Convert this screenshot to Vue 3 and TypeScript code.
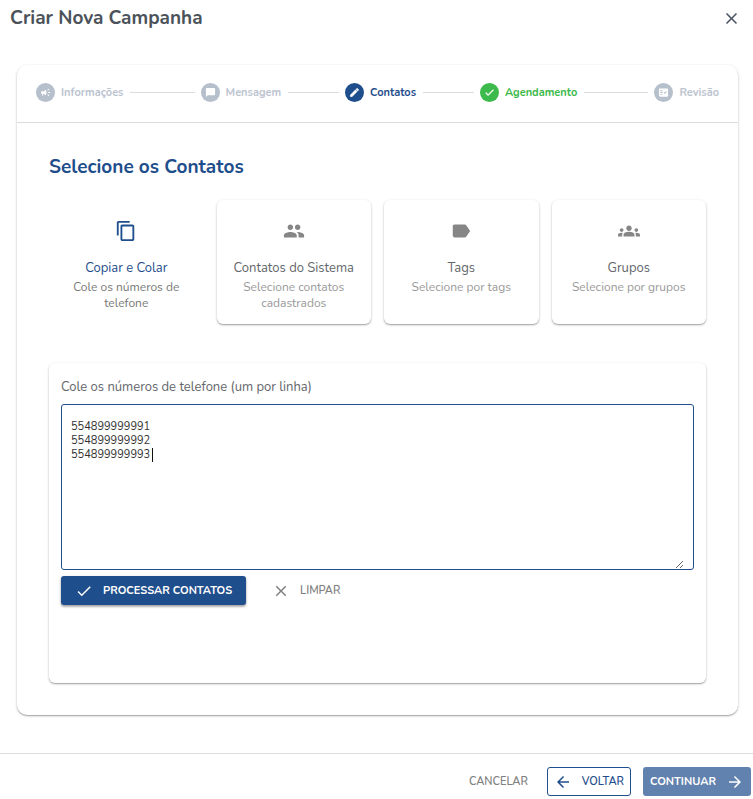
<script setup lang="ts">
import { ref } from 'vue'

interface Step {
  label: string
  state: 'idle' | 'active' | 'done'
  icon: string
}

interface Source {
  title: string
  caption: string
  icon: string
}

const steps: Step[] = [
  {
    label: 'Informações',
    state: 'idle',
    icon: 'M18 11v2h4v-2h-4zm-2 6.610c.96.71 2.210 1.650 3.200 2.390.4-.53.8-1.070 1.200-1.600-.99-.74-2.240-1.680-3.200-2.400-.4.54-.8 1.080-1.200 1.610zM20.400 5.600c-.4-.53-.8-1.070-1.200-1.600-.99.740-2.240 1.680-3.200 2.400.4.530.8 1.070 1.200 1.600.96-.72 2.210-1.650 3.200-2.400zM4 9c-1.100 0-2 .9-2 2v2c0 1.100.9 2 2 2h1v4h2v-4h1l5 3V6L8 9H4zm11.500 3c0-1.330-.58-2.530-1.500-3.350v6.690c.92-.81 1.500-2.010 1.500-3.340z',
  },
  {
    label: 'Mensagem',
    state: 'idle',
    icon: 'M20 2H4c-1.100 0-2 .9-2 2v18l4-4h14c1.100 0 2-.9 2-2V4c0-1.100-.9-2-2-2z',
  },
  {
    label: 'Contatos',
    state: 'active',
    icon: 'M3 17.250V21h3.750L17.810 9.940l-3.750-3.750L3 17.250zM20.710 7.040c.39-.39.39-1.020 0-1.410l-2.340-2.340c-.39-.39-1.020-.39-1.410 0l-1.830 1.830 3.750 3.750 1.830-1.830z',
  },
  {
    label: 'Agendamento',
    state: 'done',
    icon: 'M9 16.200L4.800 12l-1.400 1.400L9 19 21 7l-1.400-1.400L9 16.200z',
  },
  {
    label: 'Revisão',
    state: 'idle',
    icon: 'M20 3H4c-1.100 0-2 .9-2 2v14c0 1.100.9 2 2 2h16c1.100 0 2-.9 2-2V5c0-1.100-.9-2-2-2zM10 17H5v-2h5v2zm0-4H5v-2h5v2zm0-4H5V7h5v2zm4.820 6L12 12.160l1.410-1.410 1.410 1.420L17.990 9l1.420 1.420L14.820 15z',
  },
]

const sources: Source[] = [
  {
    title: 'Copiar e Colar',
    caption: 'Cole os números de telefone',
    icon: 'M16 1H4c-1.100 0-2 .9-2 2v14h2V3h12V1zm3 4H8c-1.100 0-2 .9-2 2v14c0 1.100.9 2 2 2h11c1.100 0 2-.9 2-2V7c0-1.100-.9-2-2-2zm0 16H8V7h11v14z',
  },
  {
    title: 'Contatos do Sistema',
    caption: 'Selecione contatos cadastrados',
    icon: 'M16 11c1.660 0 2.990-1.340 2.990-3S17.660 5 16 5c-1.660 0-3 1.340-3 3s1.340 3 3 3zm-8 0c1.660 0 2.990-1.340 2.990-3S9.660 5 8 5C6.340 5 5 6.340 5 8s1.340 3 3 3zm0 2c-2.330 0-7 1.170-7 3.500V19h14v-2.500c0-2.330-4.670-3.500-7-3.500zm8 0c-.29 0-.62.020-.97.050 1.160.84 1.970 1.970 1.970 3.450V19h6v-2.500c0-2.330-4.670-3.500-7-3.500z',
  },
  {
    title: 'Tags',
    caption: 'Selecione por tags',
    icon: 'M17.630 5.840C17.270 5.330 16.670 5 16 5L5 5.010C3.900 5.010 3 5.900 3 7v10c0 1.100.9 1.990 2 1.990L16 19c.67 0 1.270-.33 1.630-.84L22 12l-4.370-6.160z',
  },
  {
    title: 'Grupos',
    caption: 'Selecione por grupos',
    icon: 'M12 12.750c1.630 0 3.070.39 4.240.9 1.080.48 1.760 1.560 1.760 2.730V18H6v-1.610c0-1.180.68-2.260 1.760-2.730 1.170-.52 2.610-.91 4.240-.91zM4 13c1.100 0 2-.9 2-2s-.9-2-2-2-2 .9-2 2 .9 2 2 2zm1.130 1.100c-.37-.06-.74-.1-1.130-.1-.99 0-1.930.21-2.780.58C.48 14.900 0 15.620 0 16.430V18h4.500v-1.610c0-.83.23-1.610.63-2.290zM20 13c1.100 0 2-.9 2-2s-.9-2-2-2-2 .9-2 2 .9 2 2 2zm4 3.430c0-.81-.48-1.530-1.220-1.850-.85-.37-1.790-.58-2.780-.58-.39 0-.76.040-1.130.1.400.68.630 1.460.63 2.290V18H24v-1.570zM12 6c1.660 0 3 1.340 3 3s-1.340 3-3 3-3-1.340-3-3 1.340-3 3-3z',
  },
]

const selected = ref(0)
const numbers = ref('554899999991\n554899999992\n554899999993')
</script>

<template>
  <div class="dialog">
    <header class="dialog-header">
      <h1>Criar Nova Campanha</h1>
      <button class="close" type="button" aria-label="Fechar">
        <svg viewBox="0 0 24 24"><path d="M19 6.410L17.590 5 12 10.590 6.410 5 5 6.410 10.590 12 5 17.590 6.410 19 12 13.410 17.590 19 19 17.590 13.410 12z" /></svg>
      </button>
    </header>

    <main class="stepper">
      <ol class="steps">
        <li v-for="step in steps" :key="step.label" class="step" :class="step.state">
          <span class="dot"><svg viewBox="0 0 24 24"><path :d="step.icon" /></svg></span>
          <span class="step-label">{{ step.label }}</span>
        </li>
      </ol>

      <section class="content">
        <h2>Selecione os Contatos</h2>

        <div class="sources">
          <button
            v-for="(source, index) in sources"
            :key="source.title"
            class="source"
            :class="{ selected: index === selected }"
            type="button"
            @click="selected = index"
          >
            <svg viewBox="0 0 24 24"><path :d="source.icon" /></svg>
            <span class="source-title">{{ source.title }}</span>
            <span class="source-caption">{{ source.caption }}</span>
          </button>
        </div>

        <div class="panel">
          <label for="numbers">Cole os números de telefone (um por linha)</label>
          <div class="field">
            <textarea id="numbers" v-model="numbers" spellcheck="false"></textarea>
            <span class="caret"></span>
          </div>
          <div class="panel-actions">
            <button class="btn primary raised" type="button">
              <svg viewBox="0 0 24 24"><path d="M9 16.200L4.800 12l-1.400 1.400L9 19 21 7l-1.400-1.400L9 16.200z" /></svg>
              <span>PROCESSAR CONTATOS</span>
            </button>
            <button class="btn flat" type="button" @click="numbers = ''">
              <svg viewBox="0 0 24 24"><path d="M19 6.410L17.590 5 12 10.590 6.410 5 5 6.410 10.590 12 5 17.590 6.410 19 12 13.410 17.590 19 19 17.590 13.410 12z" /></svg>
              <span>LIMPAR</span>
            </button>
          </div>
        </div>
      </section>
    </main>

    <footer class="dialog-footer">
      <button class="btn flat" type="button">CANCELAR</button>
      <button class="btn outline" type="button">
        <svg viewBox="0 0 24 24"><path d="M20 11H7.830l5.590-5.590L12 4l-8 8 8 8 1.410-1.410L7.830 13H20v-2z" /></svg>
        <span>VOLTAR</span>
      </button>
      <button class="btn primary dimmed" type="button">
        <span>CONTINUAR</span>
        <svg viewBox="0 0 24 24"><path d="M12 4l-1.410 1.410L16.170 11H4v2h12.170l-5.580 5.590L12 20l8-8z" /></svg>
      </button>
    </footer>
  </div>
</template>

<style>
body {
  margin: 0;
  background: #fff;
}
</style>

<style scoped>
.dialog {
  --primary: #1f4e8c;
  display: flex;
  flex-direction: column;
  min-height: 100vh;
  box-sizing: border-box;
  font-family: Nunito, "Noto Sans", sans-serif;
  color: #4b5563;
  background: #fff;
}

.dialog *,
.dialog *::before {
  box-sizing: border-box;
}

svg {
  display: block;
  flex: none;
  fill: currentColor;
}

button {
  font: inherit;
  color: inherit;
  border: 0;
  background: none;
  cursor: pointer;
}

.dialog-header {
  display: flex;
  align-items: center;
  justify-content: space-between;
  height: 36px;
  padding: 0 12px 0 10px;
}

h1,
h2 {
  margin: 0;
  font-size: 19px;
  font-weight: 700;
  line-height: 32px;
}

h1 {
  color: #4b5259;
}

.close {
  padding: 0;
}

.close svg {
  width: 19px;
  height: 19px;
}

.stepper {
  flex: 1;
  display: flex;
  flex-direction: column;
  margin: 29px 15px 38px 17px;
  border-radius: 10px;
  box-shadow: 0 1px 3px rgba(0, 0, 0, 0.2), 0 1px 1px rgba(0, 0, 0, 0.22);
}

.steps {
  display: flex;
  align-items: center;
  gap: 7px;
  height: 58px;
  margin: 0;
  padding: 0 19px 2px;
  list-style: none;
  border-bottom: 1px solid #dcdcdc;
}

.step {
  display: flex;
  flex: 50 0 auto;
  align-items: center;
  gap: 6px;
  font-size: 11px;
  font-weight: 700;
  line-height: 16px;
  color: #bcc4d0;
}

.step:first-child {
  flex: none;
}

.step:nth-child(2),
.step:last-child {
  flex-grow: 63;
}

.step + .step::before {
  content: "";
  flex: 1;
  height: 1px;
  background: #dcdcdc;
}

.dot {
  display: grid;
  place-items: center;
  width: 19px;
  height: 19px;
  border-radius: 50%;
  background: #b6bfcc;
  color: #fff;
}

.dot svg {
  width: 11px;
  height: 11px;
}

.active {
  color: var(--primary);
}

.active .dot {
  background: var(--primary);
}

.done {
  color: #3cba4b;
}

.done .dot {
  background: #3cba4b;
}

.active .dot,
.done .dot {
  color: #fff;
}

.active svg,
.done svg {
  stroke: currentColor;
  stroke-width: 1;
}

.content {
  flex: 1;
  display: flex;
  flex-direction: column;
  padding: 28px 32px 32px;
}

h2 {
  color: var(--primary);
}

.sources {
  display: grid;
  grid-template-columns: repeat(4, 1fr);
  gap: 13px;
  margin-top: 17px;
}

.source {
  display: flex;
  flex-direction: column;
  align-items: center;
  min-height: 124px;
  padding: 20px 12px 12px;
  border-radius: 6px;
  color: #868686;
  box-shadow: 0 1px 3px rgba(0, 0, 0, 0.2), 0 1px 1px rgba(0, 0, 0, 0.22);
}

.source svg {
  width: 22px;
  height: 22px;
}

.source-title {
  margin-top: 16px;
  font-size: 13px;
  line-height: 20px;
  color: #63666b;
}

.source-caption {
  margin-top: 1px;
  font-size: 12px;
  line-height: 16px;
  color: #999;
}

.source.selected {
  color: var(--primary);
  box-shadow: none;
}

.selected .source-title {
  color: var(--primary);
}

.selected .source-caption {
  color: #777;
}

.panel {
  flex: 1;
  margin-top: 39px;
  padding: 14px 12px 12px;
  border-radius: 6px;
  box-shadow: 0 1px 3px rgba(0, 0, 0, 0.2), 0 1px 1px rgba(0, 0, 0, 0.22);
}

label {
  display: block;
  margin-bottom: 7px;
  font-size: 13px;
  line-height: 20px;
  color: #63666b;
}

.field {
  position: relative;
  padding: 0 9px;
  border: 1px solid var(--primary);
  border-radius: 3px;
}

textarea {
  display: block;
  width: 100%;
  height: 164px;
  padding: 15px 0 0;
  border: 0;
  outline: 0;
  resize: vertical;
  font: inherit;
  font-size: 11px;
  line-height: 14px;
  color: #333;
  background: transparent;
}

.caret {
  position: absolute;
  top: 43px;
  left: 90px;
  width: 1px;
  height: 14px;
  background: #111;
}

.panel-actions {
  display: flex;
  gap: 12px;
  margin-top: 6px;
}

.btn {
  display: flex;
  align-items: center;
  gap: 10px;
  height: 29px;
  padding: 0 14px;
  border-radius: 3px;
  font-size: 11px;
  font-weight: 600;
  line-height: 16px;
}

.btn svg {
  width: 18px;
  height: 18px;
}

.primary {
  color: #fff;
  font-weight: 700;
  background: var(--primary);
}

.raised {
  box-shadow: 0 1px 3px rgba(0, 0, 0, 0.25), 0 2px 2px rgba(0, 0, 0, 0.2);
}

.flat {
  color: #808080;
}

.outline {
  padding: 0 6px;
  border: 1px solid var(--primary);
  color: var(--primary);
}

.dimmed {
  padding: 0 7px;
  opacity: 0.7;
}

.dialog-footer {
  display: flex;
  align-items: center;
  justify-content: flex-end;
  gap: 12px;
  height: 46px;
  padding: 10px 2px 0 0;
  border-top: 1px solid #dcdcdc;
}

.dialog-footer .flat {
  padding: 0 7px;
}
</style>
